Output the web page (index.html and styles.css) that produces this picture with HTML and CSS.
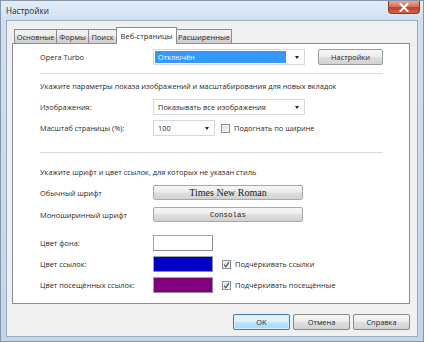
FILE: index.html
```html
<!DOCTYPE html>
<html lang="ru">
<head>
<meta charset="utf-8">
<title>Настройки</title>
<link rel="stylesheet" href="styles.css">
</head>
<body>
<div class="window">
  <div class="titlebar">
    <span class="title">Настройки</span>
    <div class="close">
      <svg width="12" height="9" viewBox="0 0 12 9"><path d="M2.5 1 L9.5 8 M9.5 1 L2.5 8" stroke="#fff" stroke-width="2" stroke-linecap="square"/></svg>
    </div>
  </div>
  <div class="client">
    <div class="tabs">
      <div class="tab t1">Основные</div>
      <div class="tab t2">Формы</div>
      <div class="tab t3">Поиск</div>
      <div class="tab active t4">Веб-страницы</div>
      <div class="tab t5">Расширенные</div>
    </div>
    <div class="panel">
      <div class="row r-turbo">
        <span class="label">Opera Turbo</span>
        <div class="combo wide focused"><span class="combo-text sel">Отключён</span><span class="arrow"></span></div>
        <div class="btn btn-settings">Настройки</div>
      </div>
      <div class="sep sep1"></div>
      <div class="row heading h1">Укажите параметры показа изображений и масштабирования для новых вкладок</div>
      <div class="row r-img">
        <span class="label">Изображения:</span>
        <div class="combo wide"><span class="combo-text">Показывать все изображения</span><span class="arrow"></span></div>
      </div>
      <div class="row r-zoom">
        <span class="label">Масштаб страницы (%):</span>
        <div class="combo narrow"><span class="combo-text">100</span><span class="arrow"></span></div>
        <span class="check cb-zoom"></span>
        <span class="cb-label">Подогнать по ширине</span>
      </div>
      <div class="sep sep2"></div>
      <div class="row heading h2">Укажите шрифт и цвет ссылок, для которых не указан стиль</div>
      <div class="row r-font1">
        <span class="label">Обычный шрифт</span>
        <div class="btn font-btn serif">Times New Roman</div>
      </div>
      <div class="row r-font2">
        <span class="label">Моноширинный шрифт</span>
        <div class="btn font-btn mono">Consolas</div>
      </div>
      <div class="row r-c1">
        <span class="label">Цвет фона:</span>
        <span class="swatch sw-white"></span>
      </div>
      <div class="row r-c2">
        <span class="label">Цвет ссылок:</span>
        <span class="swatch sw-blue"></span>
        <span class="check checked cb-color"><svg width="7" height="7" viewBox="0 0 7 7"><path d="M1 3.6 L2.8 5.6 L6 1.2" fill="none" stroke="#4a5f7e" stroke-width="1.3"/></svg></span>
        <span class="cb-label">Подчёркивать ссылки</span>
      </div>
      <div class="row r-c3">
        <span class="label">Цвет посещённых ссылок:</span>
        <span class="swatch sw-purple"></span>
        <span class="check checked cb-color"><svg width="7" height="7" viewBox="0 0 7 7"><path d="M1 3.6 L2.8 5.6 L6 1.2" fill="none" stroke="#4a5f7e" stroke-width="1.3"/></svg></span>
        <span class="cb-label">Подчёркивать посещённые</span>
      </div>
    </div>
    <div class="buttons">
      <div class="btn dlg default">OK</div>
      <div class="btn dlg">Отмена</div>
      <div class="btn dlg">Справка</div>
    </div>
  </div>
</div>
</body>
</html>
```

FILE: styles.css
```css
* { box-sizing: border-box; }
html, body { margin: 0; padding: 0; }
body {
  width: 424px;
  height: 342px;
  overflow: hidden;
  font-family: "Open Sans", "Noto Sans", sans-serif;
  font-size: 7.4px;
  color: #2a2a2a;
  background: #c6d8ec;
}
.window {
  width: 424px;
  height: 342px;
  display: flex;
  flex-direction: column;
  background: linear-gradient(180deg, #e2edf8 0px, #d0e0f1 20px, #c8daee 200px, #c2d5ea 342px);
  border: 1px solid #8796a8;
}
.titlebar {
  height: 19px;
  display: flex;
  align-items: flex-start;
  padding-left: 5px;
}
.title {
  margin-top: 4px;
  font-size: 8.2px;
  color: #1e2a36;
}
.close {
  margin-left: auto;
  margin-right: 3px;
  width: 32px;
  height: 13px;
  border: 1px solid #8a3a2e;
  border-top: none;
  border-radius: 0 0 4px 4px;
  background: linear-gradient(180deg, #e9a99b 0%, #d7735f 45%, #c0402a 55%, #d2624c 100%);
  display: flex;
  align-items: center;
  justify-content: center;
}
.client {
  margin: 0 5px 4px 5px;
  flex: 1;
  background: #f0f0f0;
  border: 1px solid #9aabbe;
  padding: 6px 7px 0 5px;
  display: flex;
  flex-direction: column;
}
.tabs {
  display: flex;
  align-items: flex-end;
  height: 16px;
  padding-left: 2px;
  position: relative;
  z-index: 2;
}
.tab {
  height: 14px;
  border: 1px solid #898c95;
  border-bottom: none;
  margin-left: -1px;
  background: linear-gradient(180deg, #f3f3f3 0%, #ebebeb 50%, #dddddd 51%, #cfcfcf 100%);
  display: flex;
  align-items: center;
  justify-content: center;
  white-space: nowrap;
  font-size: 7.5px;
}
.tab.t1 { margin-left: 0; width: 43px; }
.tab.t2 { width: 33px; }
.tab.t3 { width: 29px; }
.tab.t4 { width: 61px; }
.tab.t5 { width: 56px; }
.tab.active {
  height: 17px;
  margin-bottom: -1px;
  background: #fff;
  position: relative;
  z-index: 3;
}
.panel {
  height: 261px;
  width: 398px;
  background: #fff;
  border: 1px solid #898c95;
  padding-left: 27px;
  display: flex;
  flex-direction: column;
}
.row {
  display: flex;
  align-items: center;
  height: 16px;
  white-space: nowrap;
}
.label { width: 113px; flex: none; }
.r-turbo { margin-top: 5px; }
.sep {
  width: 343px;
  height: 1px;
  background: #d9dcdf;
}
.sep1 { margin-top: 8px; }
.h1 { margin-top: 4px; }
.r-img { margin-top: 5px; }
.r-zoom { margin-top: 5px; }
.sep2 { margin-top: 16px; }
.h2 { margin-top: 11px; }
.r-font1 { margin-top: 5px; height: 15px; }
.r-font2 { margin-top: 7px; height: 15px; }
.r-c1 { margin-top: 13px; }
.r-c2 { margin-top: 5px; }
.r-c3 { margin-top: 5px; }

.combo {
  height: 16px;
  border: 1px solid #d6d9dd;
  background: #fff;
  display: flex;
  align-items: center;
  position: relative;
  padding: 1px;
}
.combo.wide { width: 152px; }
.combo.narrow { width: 62px; }
.combo-text {
  flex: 1;
  height: 100%;
  display: flex;
  align-items: center;
  padding-left: 3px;
}
.combo-text.sel {
  background: #3399ff;
  color: #fff;
  margin-right: 7px;
}
.arrow {
  width: 0;
  height: 0;
  border-left: 2.5px solid transparent;
  border-right: 2.5px solid transparent;
  border-top: 3px solid #222;
  margin-right: 4px;
  margin-left: 2px;
}
.btn {
  height: 16px;
  border: 1px solid #9a9b9b;
  border-radius: 2px;
  background: linear-gradient(180deg, #f6f6f6 0%, #ececec 48%, #dedede 52%, #d2d2d2 100%);
  display: flex;
  align-items: center;
  justify-content: center;
  white-space: nowrap;
}
.btn-settings { margin-left: 13px; width: 65px; }
.font-btn {
  width: 150px;
  height: 15px;
  border-color: #a9a9a9;
}
.serif {
  font-family: "Liberation Serif", serif;
  font-size: 10px;
  color: #1a1a1a;
}
.mono {
  font-family: "Liberation Mono", monospace;
  font-size: 7.5px;
}
.check {
  width: 9px;
  height: 9px;
  border: 1px solid #8f8f8f;
  background: linear-gradient(135deg, #dcdcdc 0%, #f4f4f4 100%);
  box-shadow: inset 0 0 0 1px #f4f4f4;
  display: flex;
  align-items: center;
  justify-content: center;
  flex: none;
}
.cb-zoom { margin-left: 6px; }
.cb-color { margin-left: 9px; }
.cb-label { margin-left: 4px; }
.swatch {
  width: 60px;
  height: 16px;
  border: 1px solid #a3a3a3;
  border-right-color: #8d8d8d;
  border-bottom-color: #8d8d8d;
  flex: none;
}
.sw-white { background: #fff; }
.sw-blue { background: #0000c8; }
.sw-purple { background: #800080; }

.buttons {
  display: flex;
  justify-content: flex-end;
  gap: 3px;
  margin-top: 10px;
  width: 398px;
}
.btn.dlg { width: 57px; height: 16px; border-color: #8a8a8a; }
.btn.dlg.default {
  border-color: #3c7fb1;
  background: linear-gradient(180deg, #eaf6fd 0%, #d9f0fc 48%, #bee6fd 52%, #a7d9f5 100%);
  box-shadow: inset 0 0 0 1px #cfeefe;
}
```
